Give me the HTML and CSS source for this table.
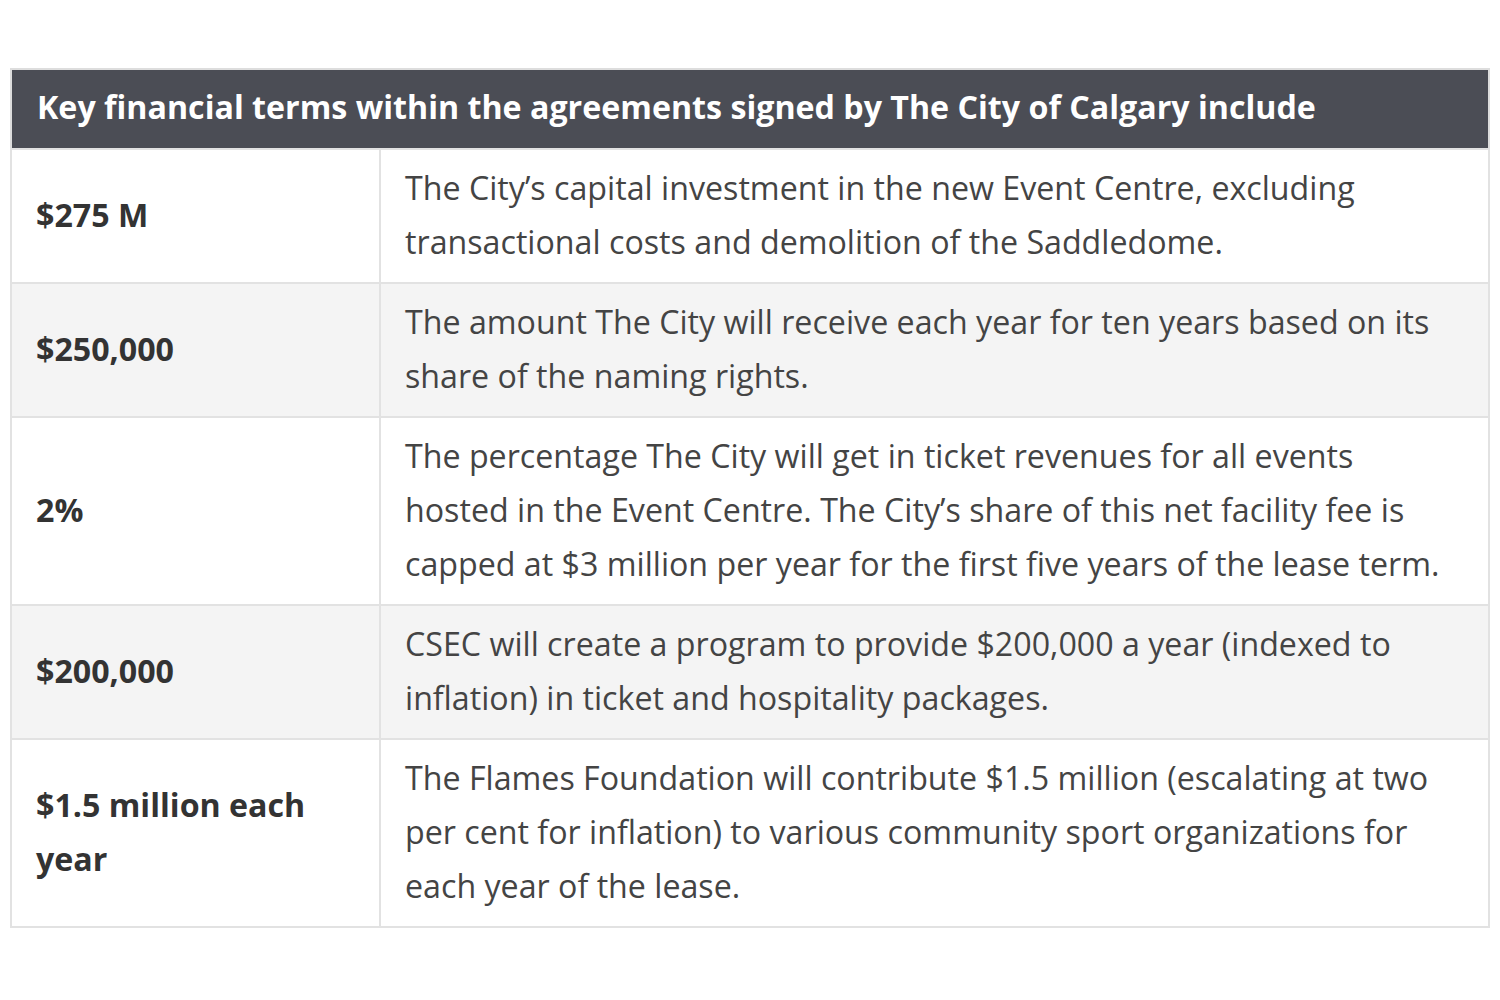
FILE: index.html
```html
<!DOCTYPE html>
<html>
<head>
<meta charset="utf-8">
<link rel="stylesheet" href="styles.css">
</head>
<body>
<table class="terms">
  <colgroup>
    <col class="col-key">
    <col class="col-desc">
  </colgroup>
  <thead>
    <tr><th colspan="2" class="head">Key financial terms within the agreements signed by The City of Calgary include</th></tr>
  </thead>
  <tbody>
    <tr>
      <td class="key">$275 M</td>
      <td class="desc">The City’s capital investment in the new Event Centre, excluding transactional costs and demolition of the Saddledome.</td>
    </tr>
    <tr class="alt">
      <td class="key">$250,000</td>
      <td class="desc">The amount The City will receive each year for ten years based on its share of the naming rights.</td>
    </tr>
    <tr>
      <td class="key">2%</td>
      <td class="desc">The percentage The City will get in ticket revenues for all events hosted in the Event Centre. The City’s share of this net facility fee is capped at $3 million per year for the first five years of the lease term.</td>
    </tr>
    <tr class="alt">
      <td class="key">$200,000</td>
      <td class="desc">CSEC will create a program to provide $200,000 a year (indexed to inflation) in ticket and hospitality packages.</td>
    </tr>
    <tr>
      <td class="key">$1.5 million each year</td>
      <td class="desc">The Flames Foundation will contribute $1.5 million (escalating at two per cent for inflation) to various community sport organizations for each year of the lease.</td>
    </tr>
  </tbody>
</table>
</body>
</html>
```
FILE: styles.css
```css
html, body {
  margin: 0;
  padding: 0;
  background: #ffffff;
}
body {
  font-family: "Open Sans", "Noto Sans", sans-serif;
  color: #3a3a3a;
  padding-top: 68px;
  padding-left: 10px;
}
.terms {
  width: 1480px;
  border-collapse: collapse;
  border: 2px solid #dddddd;
  table-layout: fixed;
}
.col-key {
  width: 369px;
}
.head {
  background: #4b4d55;
  color: #ffffff;
  font-weight: 700;
  font-size: 32.2px;
  text-align: left;
  height: 80px;
  padding: 0 25px 3px 25px;
  box-sizing: border-box;
  line-height: 1.2;
}
.terms td {
  border: 2px solid #e2e2e2;
  padding: 11px 36px 13px 24px;
  font-size: 32.2px;
  line-height: 54px;
  vertical-align: middle;
}
.terms td.key {
  font-weight: 700;
  color: #333333;
}
.terms td.desc {
  color: #444444;
}
.alt td {
  background: #f4f4f4;
}
```
